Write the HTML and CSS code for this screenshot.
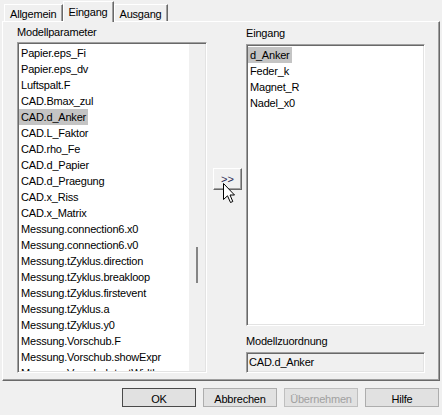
FILE: index.html
```html
<!DOCTYPE html>
<html>
<head>
<meta charset="utf-8">
<link rel="stylesheet" href="styles.css">
</head>
<body>
<div class="tabs">
  <div class="tab">Allgemein</div>
  <div class="tab active">Eingang</div>
  <div class="tab">Ausgang</div>
</div>
<div class="panel">
  <div class="col left">
    <div class="label">Modellparameter</div>
    <div class="listbox params">
      <div class="items">
        <div class="item"><span>Papier.eps_Fi</span></div>
        <div class="item"><span>Papier.eps_dv</span></div>
        <div class="item"><span>Luftspalt.F</span></div>
        <div class="item"><span>CAD.Bmax_zul</span></div>
        <div class="item"><span class="sel">CAD.d_Anker</span></div>
        <div class="item"><span>CAD.L_Faktor</span></div>
        <div class="item"><span>CAD.rho_Fe</span></div>
        <div class="item"><span>CAD.d_Papier</span></div>
        <div class="item"><span>CAD.d_Praegung</span></div>
        <div class="item"><span>CAD.x_Riss</span></div>
        <div class="item"><span>CAD.x_Matrix</span></div>
        <div class="item"><span>Messung.connection6.x0</span></div>
        <div class="item"><span>Messung.connection6.v0</span></div>
        <div class="item"><span>Messung.tZyklus.direction</span></div>
        <div class="item"><span>Messung.tZyklus.breakloop</span></div>
        <div class="item"><span>Messung.tZyklus.firstevent</span></div>
        <div class="item"><span>Messung.tZyklus.a</span></div>
        <div class="item"><span>Messung.tZyklus.y0</span></div>
        <div class="item"><span>Messung.Vorschub.F</span></div>
        <div class="item"><span>Messung.Vorschub.showExpr</span></div>
        <div class="item"><span>Messung.Vorschub.textWidth</span></div>
      </div>
      <div class="vscroll"><div class="thumb"></div></div>
    </div>
  </div>
  <div class="col mid">
    <button class="move">&gt;&gt;</button>
  </div>
  <div class="col right">
    <div class="label">Eingang</div>
    <div class="listbox inputs">
      <div class="items">
        <div class="item"><span class="sel">d_Anker</span></div>
        <div class="item"><span>Feder_k</span></div>
        <div class="item"><span>Magnet_R</span></div>
        <div class="item"><span>Nadel_x0</span></div>
      </div>
    </div>
    <div class="label assign">Modellzuordnung</div>
    <div class="field">CAD.d_Anker</div>
  </div>
</div>
<div class="buttons">
  <button class="btn default">OK</button>
  <button class="btn">Abbrechen</button>
  <button class="btn" disabled>Übernehmen</button>
  <button class="btn">Hilfe</button>
</div>
<svg class="cursor" width="14" height="22" viewBox="0 0 14 22">
  <polygon points="0.5,0.5 0.5,16.5 4.5,12.8 7.5,19.5 9.8,18.5 7,12 11.5,12" fill="#fff" stroke="#000" stroke-width="1" stroke-linejoin="miter"/>
</svg>
</body>
</html>
```
FILE: styles.css
```css
html, body {
  margin: 0;
  padding: 0;
}
body {
  background: #f0f0f0;
  font-family: "Liberation Sans", Arial, sans-serif;
  font-size: 11px;
  line-height: 14px;
  letter-spacing: -0.2px;
  color: #000;
  width: 442px;
  height: 415px;
  overflow: hidden;
  position: relative;
}

.tabs {
  display: flex;
  align-items: flex-end;
  height: 21px;
  padding-left: 4px;
}
.tab {
  box-sizing: border-box;
  height: 17px;
  padding: 2px 5px 0 5px;
  border-top: 1px solid #fff;
  border-left: 1px solid #fff;
  border-right: 1px solid #696969;
  box-shadow: inset -1px 0 #a0a0a0;
  line-height: 14px;
  white-space: nowrap;
}
.tab.active {
  height: 21px;
  margin-bottom: -1px;
  position: relative;
  z-index: 1;
  background: #f0f0f0;
  padding-top: 3px;
}

.panel {
  box-sizing: border-box;
  margin-left: 2px;
  width: 438px;
  height: 360px;
  border: 1px solid;
  border-color: #fff #696969 #696969 #fff;
  box-shadow: inset -1px -1px #a0a0a0;
  display: flex;
  padding: 3px 0 0 14px;
}

.col {
  display: flex;
  flex-direction: column;
}
.left {
  width: 190px;
}
.label {
  height: 14px;
  white-space: nowrap;
}
.left .label {
  margin-bottom: 3px;
}

.listbox {
  box-sizing: border-box;
  border: 1px solid;
  border-color: #a0a0a0 #fff #fff #a0a0a0;
  box-shadow: inset 1px 1px #696969, inset -1px -1px #e3e3e3;
  padding: 1px;
  background: #fff;
  display: flex;
  overflow: hidden;
}
.params {
  height: 331px;
}
.items {
  flex: 1;
  padding-top: 1px;
  overflow: hidden;
}
.item {
  height: 16px;
  line-height: 16px;
  white-space: nowrap;
}
.item span {
  display: inline-block;
  padding: 0 2px;
  height: 16px;
}
.item .sel {
  background: #c4c4c4;
}
.vscroll {
  width: 16px;
  background: #f0f0f0;
  padding-top: 203px;
  box-sizing: border-box;
}
.thumb {
  width: 2px;
  height: 36px;
  margin-left: 7px;
  background: #858585;
}

.mid {
  width: 39px;
  padding: 143px 0 0 6px;
  box-sizing: border-box;
}
.move {
  box-sizing: border-box;
  width: 29px;
  height: 22px;
  padding: 0;
  margin: 0;
  background: #f0f0f0;
  border: 1px solid;
  border-color: #fff #696969 #696969 #fff;
  box-shadow: inset -1px -1px #a0a0a0;
  font-family: inherit;
  font-size: 11px;
  letter-spacing: 0;
  color: #2b2b55;
}

.right {
  width: 179px;
  padding-top: 1px;
}
.right .label {
  margin-bottom: 4px;
}
.inputs {
  height: 282px;
}
.right .label.assign {
  margin-top: 8px;
}
.field {
  box-sizing: border-box;
  height: 21px;
  border: 1px solid;
  border-color: #a0a0a0 #fff #fff #a0a0a0;
  box-shadow: inset 1px 1px #696969, inset -1px -1px #e3e3e3;
  background: #f0f0f0;
  padding: 1px 2px;
  line-height: 17px;
  white-space: nowrap;
}

.buttons {
  display: flex;
  justify-content: flex-end;
  gap: 7px;
  padding-right: 3px;
  margin-top: 7px;
}
.btn {
  box-sizing: border-box;
  width: 74px;
  height: 19px;
  margin: 0;
  padding: 2px 0 0 0;
  border: 1px solid #adadad;
  background: #e1e1e1;
  font-family: inherit;
  font-size: 11px;
  line-height: 14px;
  letter-spacing: -0.2px;
  color: #000;
}
.btn.default {
  border-color: #4a4a4a;
}
.btn:disabled {
  color: #a0a0a0;
  border-color: #bfbfbf;
}

.cursor {
  position: absolute;
  left: 223px;
  top: 183px;
}
```
